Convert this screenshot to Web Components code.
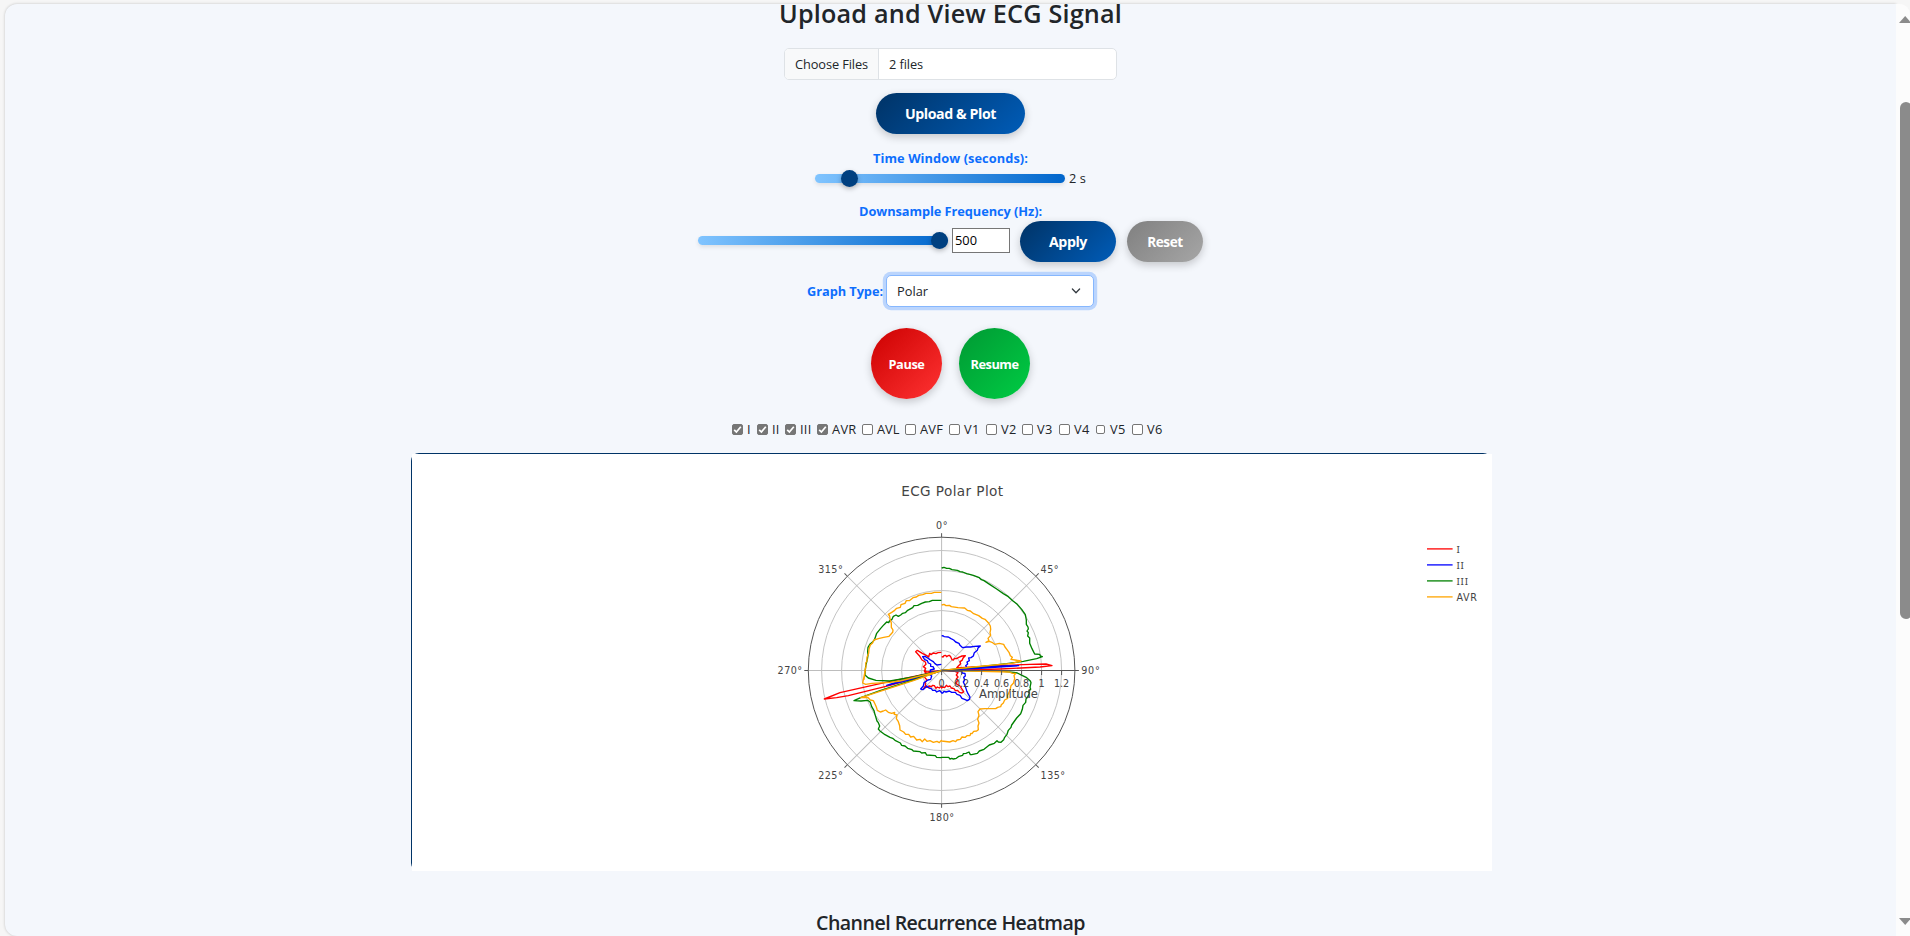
<!DOCTYPE html>
<html lang="en">
<head>
<meta charset="utf-8">
<title>ECG Signal Viewer</title>
<style>
html,body{margin:0;height:100%;overflow:hidden}
body{background:#f6f6f6;font-family:"Open Sans","Noto Sans",sans-serif;font-size:12.8px;color:#212529}
</style>
</head>
<body>
<ecg-app></ecg-app>
<script>
const define = (name, html, setup) => customElements.define(name, class extends HTMLElement {
  connectedCallback() {
    if (this.shadowRoot) return;
    const t = document.createElement('template');
    t.innerHTML = html;
    this.attachShadow({mode: 'open'}).appendChild(t.content.cloneNode(true));
    if (setup) setup(this, this.shadowRoot);
  }
});

/* Text run that spaces its letters to fill the width given in w */
define('fit-text', `<style>:host{display:inline-block;white-space:nowrap}span{display:inline-block}</style><span><slot></slot></span>`, (el, root) => {
  const w = +el.getAttribute('w'), s = root.querySelector('span');
  el.style.width = w + 'px';
  const n = el.textContent.length;
  s.style.letterSpacing = ((w - s.getBoundingClientRect().width) / n) + 'px';
});

define('pill-button', `<style>
:host{display:flex;align-items:center;justify-content:center;height:41px;border-radius:24px;color:#fff;font-weight:700;font-size:14.2px;line-height:20px;
background:linear-gradient(135deg,#036,#005cb8);box-shadow:0 3px 8px rgba(0,0,0,.2)}
:host([kind=muted]){background:linear-gradient(135deg,#808080,#a6a6a6)}
:host([kind=pause]),:host([kind=resume]){width:71px;height:71px;border-radius:50%;font-size:12.8px}
:host([kind=pause]){background:linear-gradient(135deg,#c00,#f33)}
:host([kind=resume]){background:linear-gradient(135deg,#093,#0c4)}
</style><slot></slot>`);

define('range-slider', `<style>
:host{display:flex;align-items:center;width:250px;height:9px;border-radius:5px;background:linear-gradient(90deg,#80c4ff,#06c);box-shadow:0 2px 4px rgba(0,0,0,.1)}
i{display:block;width:17px;height:17px;flex:none;border-radius:50%;background:#004080;box-shadow:0 2px 5px rgba(0,0,0,.25)}
</style><i></i>`, (el, root) => { root.querySelector('i').style.marginLeft = el.getAttribute('at') + 'px'; });

define('file-picker', `<style>
:host{display:flex;box-sizing:border-box;width:333px;height:32px;border:1px solid #dee2e6;border-radius:5px;background:#fff;overflow:hidden;line-height:31px}
.b{box-sizing:border-box;width:94px;padding-left:10px;background:#f8f9fa;border-right:1px solid #dee2e6}
.v{padding-left:10px}
</style><div class="b"><fit-text w="73">Choose Files</fit-text></div><div class="v"><fit-text w="34">2 files</fit-text></div>`);

define('graph-select', `<style>
:host{display:flex;box-sizing:border-box;align-items:center;justify-content:space-between;width:208px;height:32px;padding:0 12px 0 10px;border:1px solid #86b7fe;border-radius:5px;background:#fff;box-shadow:0 0 0 3.2px #bbd5fd}
svg{display:block}
</style><slot></slot><svg width="10" height="8" viewBox="0 0 10 8" fill="none" stroke="#343a40" stroke-width="1.3" stroke-linecap="round" stroke-linejoin="round"><path d="M1.4 2 5 5.7 8.6 2"/></svg>`);

define('lead-check', `<style>
:host{display:flex;align-items:center;height:20px;flex:none}
i{display:block;box-sizing:border-box;width:11px;height:11px;border:1px solid #767676;border-radius:2px;background:#fff;margin-right:4px;flex:none}
:host([small]) i{width:9px;height:9px;margin-right:5px}
svg{display:none;width:9px;height:9px}
:host([checked]) i{background:#767676}
:host([checked]) svg{display:block}
</style><i><svg viewBox="0 0 9 9" fill="none" stroke="#fff" stroke-width="1.7"><path d="M1.2 4.8 3.4 7 7.8 1.7"/></svg></i><slot></slot>`, el => { el.style.width = el.getAttribute('cell') + 'px'; });

define('scroll-rail', `<style>
:host{display:flex;flex-direction:column;width:14px;background:#fcfcfc;border-top-right-radius:10px;overflow:hidden;box-sizing:border-box;padding-top:12px}
svg{display:block;margin-left:3px;flex:none}
i{display:block;width:12px;height:517px;margin:79px 0 299px 4px;border-radius:6px;background:#8b8b8b;flex:none}
</style><svg width="12" height="7"><path d="M0 7 6.2 0 12.4 7z" fill="#8b8b8b"/></svg><i></i><svg width="12" height="7"><path d="M0 0 6.2 7 12.4 0z" fill="#8b8b8b"/></svg>`);

/* Trace points, one list per quadrant, in thirds of a pixel from (780,510) */
const Q = {ne: [480, 0], se: [480, 450], sw: [0, 450], nw: [0, 0]};
const traces = [
 ['red', {
  ne: '5,440 9,441 12,437 17,436 20,440 24,437 28,436 32,440 36,449 40,450 44,445 50,446 56,442 66,438 76,437 70,443 66,451 60,455 62,461 55,468 50,474 100,471 200,466 270,463 318,462 336,467 300,471 180,477 5,482',
  se: '5,31 45,34 54,38 49,45 54,51 49,57 53,62 47,69 53,74 60,78 65,86 71,95 66,99 58,97 52,91 46,92 42,86 34,84 30,78 24,80 19,76 14,83 9,81 5,84',
  sw: '484,78 478,84 472,81 468,85 463,77 458,76 454,80 448,78 444,82 436,82 431,86 437,76 435,68 441,60 434,52 438,45 484,32 300,71 180,98 133,117 170,113 205,107 330,76 484,32 440,36 436,32',
  nw: '437,489 433,483 437,475 430,470 438,463 436,456 426,450 418,437 407,425 412,421 427,430 440,437 446,441 449,430 453,434 460,429 468,431 474,428 484,427'}],
 ['blue', {
  ne: '5,378 9,377 13,380 25,381 33,386 41,390 47,396 57,400 60,406 68,413 80,411 92,411 103,409 121,408 114,414 112,421 103,428 100,438 93,443 86,444 88,452 81,456 83,462 77,467 81,474 140,469 190,468 236,467 130,474 5,481',
  se: '5,31 55,34 67,35 65,39 75,40 76,48 71,52 74,60 70,66 75,76 80,92 84,101 90,111 88,118 82,122 74,118 66,115 60,106 51,103 46,97 35,97 28,93 18,96 12,94 8,99 5,99',
  sw: '484,97 479,92 470,96 466,91 458,91 454,86 447,84 440,78 434,85 429,89 422,87 430,78 432,68 444,60 452,58 455,48 450,44 456,38 484,32 380,57 320,76 400,57 484,32 454,37',
  nw: '451,485 451,480 463,477 459,470 452,469 452,462 445,459 442,452 434,449 428,440 435,439 443,444 451,450 460,455 465,461 471,465 484,463'}],
 ['green', {
  ne: '5,174 12,172 20,175 28,175 36,179 52,181 60,185 68,186 80,191 92,194 100,196 118,203 124,209 132,212 150,224 170,237 190,251 205,260 218,272 232,283 245,298 256,314 259,330 259,343 264,351 265,357 261,363 265,368 263,378 269,384 269,400 276,416 284,432 299,433 301,438 307,440 290,446 250,454 200,461 100,472 5,481',
  se: '5,31 190,34 222,37 232,39 246,46 260,53 271,63 273,68 270,82 272,88 266,94 268,100 263,111 258,117 257,127 249,136 247,148 242,161 230,174 215,195 213,202 205,211 201,223 194,232 191,239 183,247 175,246 171,242 163,250 148,255 132,268 118,273 112,280 95,284 91,284 87,276 78,280 70,281 68,286 57,289 49,295 40,297 35,295 30,297 26,292 5,292',
  sw: '484,293 470,292 466,287 440,285 436,278 425,279 420,275 400,273 396,269 383,265 375,258 365,256 361,249 345,241 338,235 330,232 315,224 299,212 295,207 299,198 295,188 291,183 287,170 284,160 282,152 275,140 271,127 263,121 243,123 222,122 242,113 300,92 400,60 484,32 400,51 330,63 288,61 265,54 255,45 256,30',
  nw: '256,480 257,469 262,448 264,435 263,425 264,412 270,402 277,397 284,388 290,370 302,355 312,344 320,336 326,338 329,332 336,328 340,319 348,315 355,319 362,315 368,310 376,308 383,301 398,293 402,287 413,286 425,280 436,276 448,275 457,271 484,271'}],
 ['orange', {
  ne: '5,285 12,283 18,287 28,286 34,290 54,293 74,294 82,301 91,303 101,311 116,317 127,325 135,328 145,338 151,348 152,358 150,368 152,376 144,385 147,392 138,397 148,394 158,398 164,403 178,400 191,403 195,411 201,419 207,427 211,437 217,442 213,448 225,450 243,453 215,460 100,471 5,481',
  se: '5,31 208,36 217,40 227,40 222,47 224,55 220,70 213,77 210,91 203,106 203,115 194,120 190,129 184,134 182,140 173,142 167,146 135,146 120,147 114,155 117,166 113,178 117,189 114,198 115,209 110,213 101,214 96,221 92,220 90,227 81,227 76,232 66,231 61,238 51,240 47,245 39,242 29,246 5,243',
  sw: '484,241 478,248 471,244 460,247 450,242 441,244 434,237 427,245 420,238 410,240 401,229 392,231 386,223 377,223 371,216 360,210 359,197 355,185 349,176 351,165 343,163 344,157 335,160 325,157 317,150 310,153 301,156 292,151 289,141 285,132 280,122 271,120 263,112 242,113 300,94 400,62 484,32 360,63 330,67 276,70 257,73 248,69 252,50 256,30',
  nw: '252,508 255,480 258,470 257,459 261,453 261,442 266,430 267,417 271,405 277,400 282,390 295,386 311,382 327,379 338,367 339,360 334,352 334,339 330,328 329,318 325,313 335,307 344,301 350,295 361,292 363,284 375,280 379,272 388,272 399,263 409,261 416,256 428,254 438,250 454,250 463,247 484,247'}]
];

define('polar-chart', `<style>
:host{display:block;width:1079px;height:417px;border-top:1px solid #036;border-left:1px solid #036;border-radius:8px;box-sizing:content-box}
.s{width:1080px;height:417px;background:#fff}
svg{display:block;font-family:"DejaVu Sans",Verdana,sans-serif;font-size:9.6px;fill:#444}
</style><div class="s"><svg width="1080" height="417" viewBox="412 454 1080 417"></svg></div>`, (el, root) => {
  const cx = 941.6, cy = 670.5, R = 133.3;
  let g = '<g fill="none" stroke="#c4c4c4" stroke-width="1">';
  for (let r = 20; r <= 120; r += 20) g += `<circle cx="${cx}" cy="${cy}" r="${r}"/>`;
  for (let a = 0; a < 4; a++) g += `<path d="M${cx} ${cy - R}V${cy + R}" stroke="#bdbdbd" transform="rotate(${a * 45} ${cx} ${cy})"/>`;
  g += '</g><g fill="none" stroke-width="1.35" stroke-linejoin="round">';
  for (const [c, q] of traces) {
    const pts = ['ne', 'se', 'sw', 'nw'].flatMap(k => q[k].split(' ').map(p => {
      const [x, y] = p.split(',').map(Number);
      return ((x + Q[k][0]) / 3 + 780).toFixed(2) + ',' + ((y + Q[k][1]) / 3 + 510).toFixed(2);
    }));
    g += `<polyline stroke="${c}" points="${pts.join(' ')}"/>`;
  }
  g += `</g><g fill="none" stroke="#555" stroke-width="1"><circle cx="${cx}" cy="${cy}" r="${R}"/>`;
  for (let a = 0; a < 8; a++) g += `<path d="M${cx} ${cy - R}v-4" transform="rotate(${a * 45} ${cx} ${cy})"/>`;
  g += `<path d="M${cx} ${cy}h${R}"/>`;
  for (let r = 0; r <= 120; r += 20) g += `<path d="M${cx + r} ${cy}v4.5"/>`;
  g += '</g>';
  const T = (x, y, w, s, extra = '') => `<text x="${x}" y="${y}" textLength="${w}" ${extra}>${s}</text>`;
  g += T(936, 529, 11.5, '0°') + T(818.2, 573, 24.5, '315°') + T(1040.6, 573, 18, '45°') + T(1081.2, 674, 18.5, '90°')
    + T(777.6, 674, 24.5, '270°') + T(818.2, 779, 24.5, '225°') + T(1040.6, 779, 24.5, '135°') + T(929.5, 821, 24.5, '180°');
  ['0', '0.2', '0.4', '0.6', '0.8', '1', '1.2'].forEach((s, i) => { g += `<text x="${cx + i * 20}" y="687" text-anchor="middle">${s}</text>`; });
  g += T(979, 697.5, 59, 'Amplitude', 'font-size="11.6"') + T(901.2, 495.5, 102, 'ECG Polar Plot', 'font-size="13.6"');
  [['I', 'red', 4.2], ['II', 'blue', 8.4], ['III', 'green', 12.6], ['AVR', 'orange', 20.5]].forEach(([s, c, w], i) => {
    const y = 548.9 + i * 16;
    g += `<path d="M1427 ${y}h25.6" stroke="${c}" stroke-width="1.3"/>`
      + `<text x="1456.4" y="${y + 4}" font-size="${i < 3 ? 9.8 : 9.6}" ${i < 3 ? 'font-family="Noto Sans" letter-spacing=".8"' : 'textLength="' + w + '"'}>${s}</text>`;
  });
  root.querySelector('svg').innerHTML = g;
});

define('ecg-app', `<style>
:host{display:flex;box-sizing:border-box;height:936px;padding:4px 0 0 5px}
main{flex:1;display:flex;flex-direction:column;align-items:center;background:#f4f7fc;border-radius:12px 0 0 12px;overflow:hidden;box-shadow:0 0 3px rgba(0,0,0,.22)}
main>*{flex:none}
h1{margin:0;height:18px;font-size:25.2px;line-height:18px;font-weight:600}
h2{margin:39px 0 0;font-size:19.6px;line-height:26px;font-weight:600}
.row{display:flex;align-items:center}
.label{color:#0d6efd;font-weight:700;line-height:20px;height:20px}
.num{box-sizing:border-box;width:58px;height:25px;border:1.5px solid #767676;background:#fff;color:#000;padding-left:2px;line-height:22px;margin:0 10px 2px 4px}
</style>
<main>
<h1><fit-text w="343">Upload and View ECG Signal</fit-text></h1>
<file-picker style="margin-top:26px"></file-picker>
<pill-button style="width:149px;margin-top:13px"><fit-text w="91">Upload &amp; Plot</fit-text></pill-button>
<div class="label" style="margin-top:14px"><fit-text w="155">Time Window (seconds):</fit-text></div>
<div class="row" style="height:19px;margin-top:1px"><range-slider at="26"></range-slider><fit-text w="17" style="margin:0 0 1px 4px">2 s</fit-text></div>
<div class="label" style="margin-top:13px"><fit-text w="183">Downsample Frequency (Hz):</fit-text></div>
<div class="row" style="height:41px"><range-slider at="233" style="margin-bottom:2px"></range-slider><div class="num"><fit-text w="22">500</fit-text></div><pill-button style="width:96px"><fit-text w="38">Apply</fit-text></pill-button><pill-button kind="muted" style="width:76px;margin-left:11px;font-size:13.6px"><fit-text w="35.5">Reset</fit-text></pill-button></div>
<div class="row" style="margin-top:13px;height:32px"><div class="label"><fit-text w="76">Graph Type:</fit-text></div><graph-select style="margin-left:3px"><fit-text w="31">Polar</fit-text></graph-select></div>
<div class="row" style="margin-top:21px;gap:17px"><pill-button kind="pause"><fit-text w="36">Pause</fit-text></pill-button><pill-button kind="resume"><fit-text w="48">Resume</fit-text></pill-button></div>
<div class="row" style="margin-top:20px">
<lead-check checked cell="25"><fit-text w="4">I</fit-text></lead-check><lead-check checked cell="28"><fit-text w="7.5">II</fit-text></lead-check><lead-check checked cell="32"><fit-text w="11.5">III</fit-text></lead-check><lead-check checked cell="45"><fit-text w="24.5">AVR</fit-text></lead-check><lead-check cell="43"><fit-text w="22.5">AVL</fit-text></lead-check><lead-check cell="44"><fit-text w="23">AVF</fit-text></lead-check><lead-check cell="37"><fit-text w="15.5">V1</fit-text></lead-check><lead-check cell="36"><fit-text w="15.5">V2</fit-text></lead-check><lead-check cell="37"><fit-text w="15.5">V3</fit-text></lead-check><lead-check cell="37"><fit-text w="15.5">V4</fit-text></lead-check><lead-check small cell="36"><fit-text w="15.5">V5</fit-text></lead-check><lead-check cell="37"><fit-text w="15.5">V6</fit-text></lead-check>
</div>
<polar-chart style="margin-top:14px"></polar-chart>
<h2><fit-text w="269">Channel Recurrence Heatmap</fit-text></h2>
</main>
<scroll-rail></scroll-rail>`);
</script>
</body>
</html>
